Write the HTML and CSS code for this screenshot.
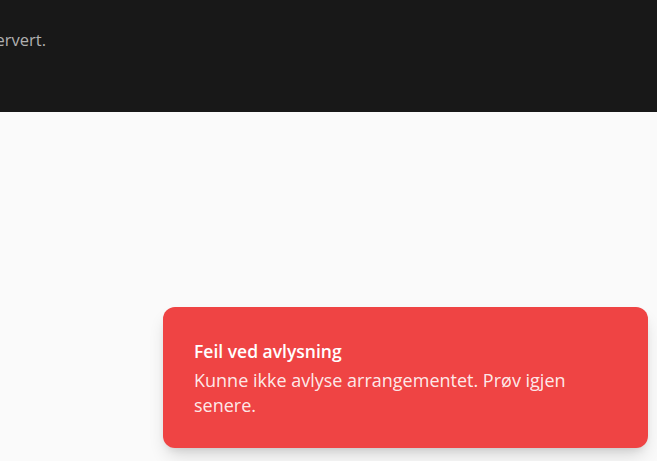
FILE: index.html
```html
<!DOCTYPE html>
<html lang="no">
<head>
<meta charset="utf-8">
<title>Arrangement</title>
<link rel="stylesheet" href="styles.css">
</head>
<body>
<header class="hero">
  <div class="hero-inner">
    <p class="hero-text">Arrangementet er reservert.</p>
  </div>
</header>
<main class="content"></main>
<div class="toast-region">
  <div class="toast" role="alert">
    <div class="toast-title">Feil ved avlysning</div>
    <div class="toast-desc">Kunne ikke avlyse arrangementet. Prøv igjen senere.</div>
  </div>
</div>
</body>
</html>
```
FILE: styles.css
```css
html, body {
  margin: 0;
  padding: 0;
}
body {
  background: #fafafa;
  font-family: "Open Sans", "Noto Sans", sans-serif;
  height: 461px;
  overflow: hidden;
  position: relative;
}
.hero {
  background: #181818;
  height: 112px;
  overflow: hidden;
}
.hero-inner {
  width: 46px;
  display: flex;
  justify-content: flex-end;
  padding-top: 28px;
}
.hero-text {
  margin: 0;
  white-space: nowrap;
  color: #b0b0b0;
  font-size: 16.5px;
  line-height: 24px;
  flex: none;
}
.toast-region {
  position: absolute;
  right: 9px;
  bottom: 13px;
  width: 485px;
}
.toast {
  box-sizing: border-box;
  height: 141px;
  background: #ef4444;
  border-radius: 12px;
  padding: 32px 60px 0 31px;
  box-shadow: 0 10px 18px -4px rgba(0,0,0,0.16), 0 4px 8px -4px rgba(0,0,0,0.12);
  color: #fff;
}
.toast-title {
  font-size: 17.5px;
  font-weight: 600;
  line-height: 24px;
}
.toast-desc {
  margin-top: 5px;
  font-size: 18px;
  line-height: 25px;
  color: rgba(255,255,255,0.9);
}
```
